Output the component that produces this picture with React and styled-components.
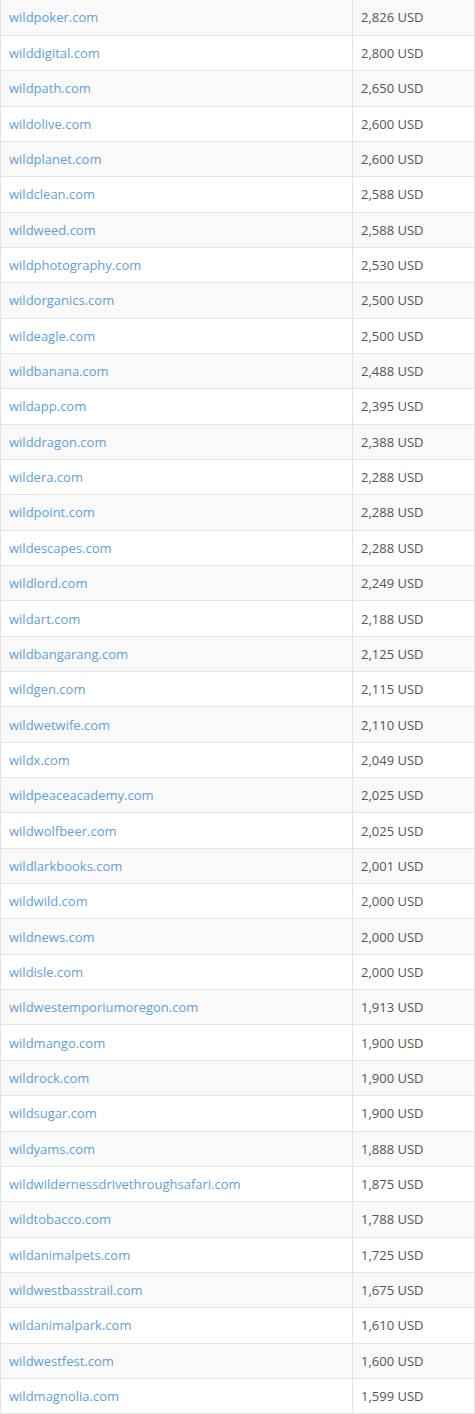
import styled, { createGlobalStyle } from 'styled-components'

const GlobalStyle = createGlobalStyle`
  html, body {
    margin: 0;
    padding: 0;
    background: #ffffff;
  }
`

const Table = styled.table`
  width: 100%;
  border-collapse: collapse;
  font-family: 'Open Sans', sans-serif;
  font-size: 13px;
  border-left: 1px solid #e4e4e4;
  border-right: 1px solid #e4e4e4;
`

const Row = styled.tr`
  height: 35.35px;
  background-color: ${(p) => (p.$odd ? '#f9f9f9' : '#ffffff')};
  border-bottom: 1px solid #e4e4e4;
`

const DomainCell = styled.td`
  width: 335px;
  padding: 0 8px;
  border-right: 1px solid #e4e4e4;
  vertical-align: middle;
`

const PriceCell = styled.td`
  padding: 0 8px;
  color: #555555;
  vertical-align: middle;
`

const Link = styled.a`
  color: #62a0d8;
  text-decoration: none;
`

const domains = [
  ['wildpoker.com', '2,826'],
  ['wilddigital.com', '2,800'],
  ['wildpath.com', '2,650'],
  ['wildolive.com', '2,600'],
  ['wildplanet.com', '2,600'],
  ['wildclean.com', '2,588'],
  ['wildweed.com', '2,588'],
  ['wildphotography.com', '2,530'],
  ['wildorganics.com', '2,500'],
  ['wildeagle.com', '2,500'],
  ['wildbanana.com', '2,488'],
  ['wildapp.com', '2,395'],
  ['wilddragon.com', '2,388'],
  ['wildera.com', '2,288'],
  ['wildpoint.com', '2,288'],
  ['wildescapes.com', '2,288'],
  ['wildlord.com', '2,249'],
  ['wildart.com', '2,188'],
  ['wildbangarang.com', '2,125'],
  ['wildgen.com', '2,115'],
  ['wildwetwife.com', '2,110'],
  ['wildx.com', '2,049'],
  ['wildpeaceacademy.com', '2,025'],
  ['wildwolfbeer.com', '2,025'],
  ['wildlarkbooks.com', '2,001'],
  ['wildwild.com', '2,000'],
  ['wildnews.com', '2,000'],
  ['wildisle.com', '2,000'],
  ['wildwestemporiumoregon.com', '1,913'],
  ['wildmango.com', '1,900'],
  ['wildrock.com', '1,900'],
  ['wildsugar.com', '1,900'],
  ['wildyams.com', '1,888'],
  ['wildwildernessdrivethroughsafari.com', '1,875'],
  ['wildtobacco.com', '1,788'],
  ['wildanimalpets.com', '1,725'],
  ['wildwestbasstrail.com', '1,675'],
  ['wildanimalpark.com', '1,610'],
  ['wildwestfest.com', '1,600'],
  ['wildmagnolia.com', '1,599'],
]

function App() {
  return (
    <>
      <GlobalStyle />
      <Table>
        <tbody>
          {domains.map(([name, price], i) => (
            <Row key={name} $odd={i % 2 === 0}>
              <DomainCell>
                <Link href="#">{name}</Link>
              </DomainCell>
              <PriceCell>{price} USD</PriceCell>
            </Row>
          ))}
        </tbody>
      </Table>
    </>
  )
}

export default App
